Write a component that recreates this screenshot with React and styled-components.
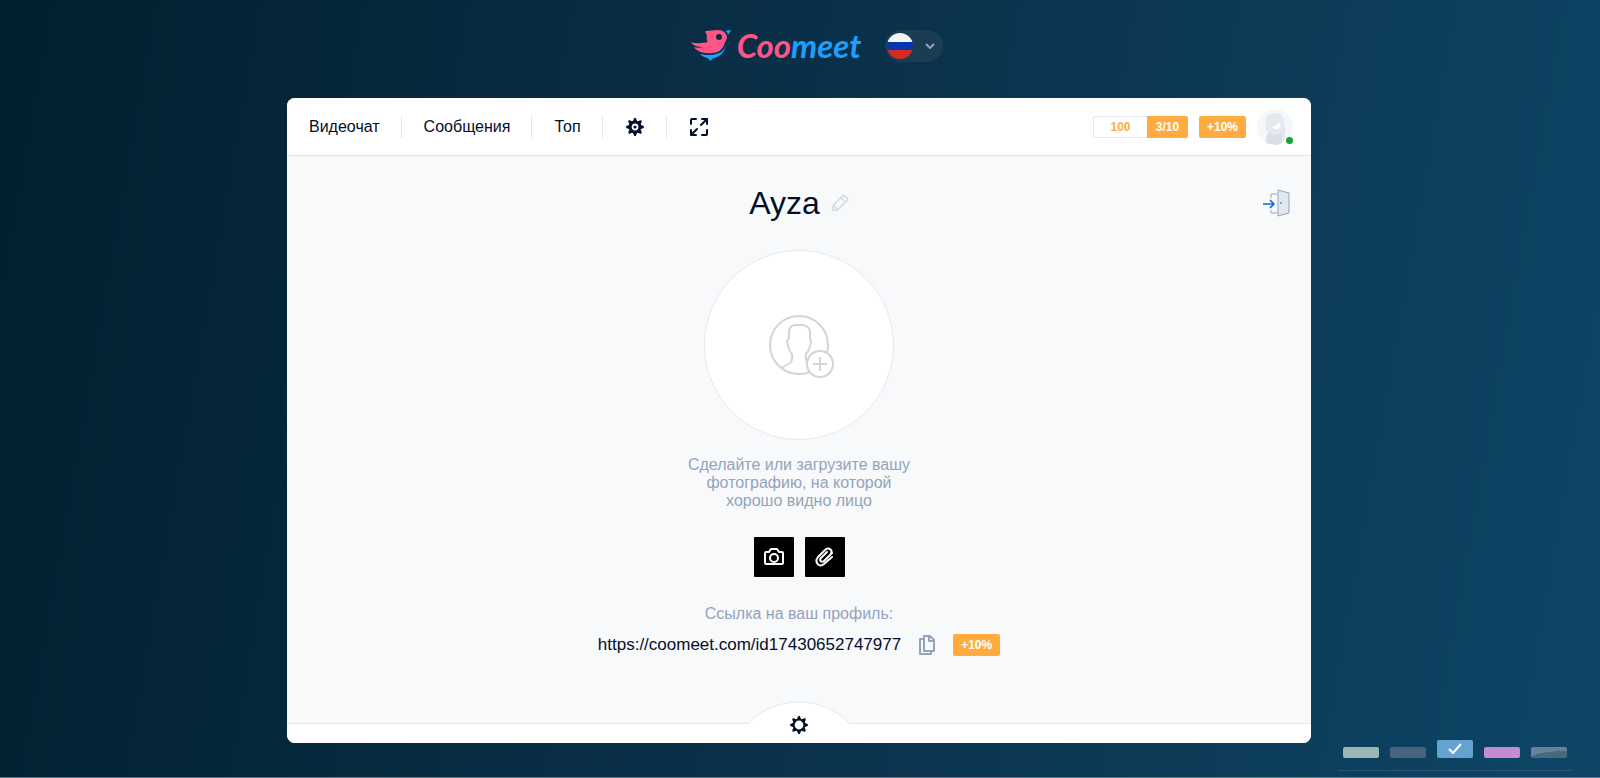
import React from "react";
import styled, { createGlobalStyle } from "styled-components";

const Icon = ({ size = 20, width, height, children, ...rest }) => (
  <svg
    width={width || size}
    height={height || size}
    fill="none"
    stroke="currentColor"
    strokeLinejoin="round"
    aria-hidden="true"
    {...rest}
  >
    {children}
  </svg>
);

const teeth = [0, 45, 90, 135, 180, 225, 270, 315];

const Gear = ({ dot }) => (
  <Icon viewBox="0 0 20 20" stroke="none" fill="currentColor">
    {teeth.map((angle) => (
      <path
        key={angle}
        d="M7.8 4.4L9 1.5Q10 0.2 11 1.5L12.2 4.4Z"
        transform={`rotate(${angle} 10 10)`}
      />
    ))}
    <circle
      cx="10"
      cy="10"
      r={dot ? 4.9 : 5.4}
      fill="white"
      stroke="currentColor"
      strokeWidth={dot ? 3 : 2}
    />
    {dot && <circle cx="10" cy="10" r="1.6" />}
  </Icon>
);

const Bird = () => (
  <Icon width={42} height={34} viewBox="0 0 42 34" stroke="none">
    <path
      d="M15 2C19 2 22 1 27 1C32 1 36 4 36 9C35 12 34 13 33 16C31 21 27 24 21 24C13 25 5 22 3 18C6 19 9 19 12 18C6 18 1 16 0 13C5 15 11 14 17 13C14 11 18 7 14 3Z"
      fill="#ff5486"
    />
    <circle cx="28" cy="8" r="3" fill="#092d44" />
    <path d="M34 2Q38 1 40 1Q39 3 37 6Q37 3 34 2Z" fill="#1e9fff" />
    <path
      d="M34 15C35 23 26 28 9 25C12 29 18 28 19 32Q20 32 21 30C28 28 36 23 34 15Z"
      fill="#1e9fff"
    />
  </Icon>
);

const tabs = ["Видеочат", "Сообщения", "Топ"];

const themes = [
  { name: "Зелёная", color: "#9ab7b5" },
  { name: "Серая", color: "#48637e" },
  { name: "Синяя", color: "#64a3d0", active: true },
  { name: "Розовая", color: "#c38bd4" },
  {
    name: "Волна",
    color:
      "radial-gradient(ellipse 105% 75% at 100% 110%, #48687f 98%, #668298 100%)",
  },
];

const App = () => {
  return (
    <>
      <GlobalStyle />
      <Page>
        <TopBar>
          <Logo href="#">
            <Bird />
            <LogoText>
              Coo<span>meet</span>
            </LogoText>
          </Logo>
          <Language aria-label="Язык">
            <Flag />
            <Icon size={10} viewBox="0 0 10 10" strokeWidth="2">
              <path d="M1 3L5 7L9 3" />
            </Icon>
          </Language>
        </TopBar>

        <Panel>
          <Header>
            <Nav>
              {tabs.map((tab) => (
                <NavItem key={tab}>
                  <a href="#">{tab}</a>
                </NavItem>
              ))}
              <NavItem>
                <IconButton aria-label="Настройки">
                  <Gear dot />
                </IconButton>
              </NavItem>
              <NavItem>
                <IconButton aria-label="Во весь экран">
                  <Icon viewBox="0 0 20 20" strokeWidth="2" strokeLinecap="round">
                    <path d="M2 7V3Q2 2 3 2H7M13 18H17Q18 18 18 17V13M12 8L18 2M13 2H18V7M8 12L2 18M2 13V18H7" />
                  </Icon>
                </IconButton>
              </NavItem>
            </Nav>
            <Status>
              <Counter>
                <span>100</span>
                <strong>3/10</strong>
              </Counter>
              <Bonus>+10%</Bonus>
              <Avatar href="#" aria-label="Профиль">
                <Icon size={36} viewBox="0 0 36 36" stroke="none">
                  <circle cx="18" cy="18" r="18" fill="#f5f7fa" />
                  <path
                    d="M9 14C7 1 28 1 27 13C27 17 30 19 28 24C29 28 27 32 26 33L23 35H10C8 31 9 26 12 23C7 21 8 17 9 14Z"
                    fill="#e4e9f0"
                  />
                  <path d="M12 23L18 26L24 24L25 34L20 36L10 34C8 30 9 26 12 23Z" fill="#d8dfe9" />
                  <path d="M15 18C19 17 21 15 23 13C25 20 20 22 15 18Z" fill="#fff" />
                </Icon>
                <Online />
              </Avatar>
            </Status>
          </Header>

          <Content>
            <TitleRow>
              <span />
              <Title>
                <h1>Ayza</h1>
                <IconButton aria-label="Изменить имя" $color="#d5dee9">
                  <Icon size={18} viewBox="0 0 20 20" strokeWidth="2">
                    <path d="M2 18V13L13 2Q14 1 15 2L18 5Q19 6 18 7L7 18ZM11 4L16 9M3 13L7 17" />
                  </Icon>
                </IconButton>
              </Title>
              <IconButton aria-label="Выйти" $color="#94a3bb">
                <Icon width={28} height={28} viewBox="0 0 28 28">
                  <path d="M8 9V5H14M8 21V24H14" />
                  <path d="M15 1L26 4V24L15 27Z" fill="#e2e8f0" />
                  <path d="M17 14H19" strokeWidth="2" />
                  <path d="M0 15H10M7 11L11 15L7 19" stroke="#0f62f2" strokeWidth="1.6" />
                </Icon>
              </IconButton>
            </TitleRow>

            <Photo aria-label="Добавить фотографию">
              <Icon size={66} viewBox="0 0 66 66" strokeWidth="2">
                <circle cx="30" cy="30" r="29" />
                <path d="M12 53L21 48Q24 46 23 39C20 36 20 34 19 31L18 26L20 23V16Q21 10 27 10H33Q39 10 41 16V23L42 26L41 31C40 34 40 36 37 39Q36 44 38 47L42 49" />
                <circle cx="51" cy="49" r="13" fill="white" />
                <path d="M51 42V56M44 49H58" />
              </Icon>
            </Photo>
            <Hint>Сделайте или загрузите вашу фотографию, на которой хорошо видно лицо</Hint>

            <Actions>
              <ActionButton aria-label="Сделать фото">
                <Icon viewBox="0 0 20 20" strokeWidth="2">
                  <path d="M2 5H5L7 2H13L15 5H18Q19 5 19 6V16Q19 17 18 17H2Q1 17 1 16V6Q1 5 2 5Z" />
                  <circle cx="10" cy="11" r="4" />
                </Icon>
              </ActionButton>
              <ActionButton aria-label="Загрузить файл">
                <Icon viewBox="0 0 20 20" strokeWidth="2" strokeLinecap="round">
                  <path d="M17 10L9 17C4 21 -1 15 3 10L10 3C14 -1 19 4 15 8L9 14C6 16 4 13 6 11L12 5M17 6L9 14" />
                </Icon>
              </ActionButton>
            </Actions>

            <LinkLabel>Ссылка на ваш профиль:</LinkLabel>
            <ProfileLink>
              <a href="https://coomeet.com/id17430652747977">
                https://coomeet.com/id17430652747977
              </a>
              <IconButton aria-label="Скопировать" $color="#94a3bb">
                <Icon width={16} height={20} viewBox="0 0 16 20" strokeWidth="2">
                  <path d="M5 1H11L15 5V16H5ZM10 1V6H15M4 4H1V19H12V17" />
                </Icon>
              </IconButton>
              <Bonus>+10%</Bonus>
            </ProfileLink>
          </Content>

          <Footer>
            <Bump>
              <Icon width={100} height={24} viewBox="0 0 100 24">
                <path d="M0 24V22C26 -6 74 -6 100 22V24Z" fill="white" stroke="none" />
                <path d="M0 22C26 -6 74 -6 100 22" stroke="#e3e9f0" />
              </Icon>
            </Bump>
            <FooterButton aria-label="Настройки">
              <Gear />
            </FooterButton>
          </Footer>
        </Panel>

        <Themes>
          {themes.map(({ name, color, active }) => (
            <Theme key={name} aria-label={name} $color={color} $active={active}>
              {active && (
                <Icon width={14} height={12} viewBox="0 0 14 12" strokeWidth="2">
                  <path d="M1 6L5 10L13 1" />
                </Icon>
              )}
            </Theme>
          ))}
        </Themes>
      </Page>
    </>
  );
};

const GlobalStyle = createGlobalStyle`
  * {
    box-sizing: border-box;
  }
  body {
    margin: 0;
    font-family: "Liberation Sans", Arial, sans-serif;
    font-size: 16px;
    color: #020f2b;
  }
  a {
    color: inherit;
    text-decoration: none;
  }
  button {
    border: 0;
    padding: 0;
    font: inherit;
    cursor: pointer;
  }
  svg {
    display: block;
  }
`;

const Page = styled.div`
  position: relative;
  display: flex;
  flex-direction: column;
  align-items: center;
  min-height: 100vh;
  padding-right: 2px;
  background: linear-gradient(100deg, #01202e 0%, #0a3049 48%, #0e4566 100%);
  border-bottom: 1px solid #5b7789;
`;

const TopBar = styled.header`
  display: flex;
  align-items: center;
  gap: 24px;
  height: 98px;
  padding-bottom: 6px;
  padding-left: 36px;
`;

const Logo = styled.a`
  display: flex;
  align-items: center;
  gap: 4px;
`;

const LogoText = styled.span`
  font-family: Lato, sans-serif;
  font-size: 33px;
  font-style: italic;
  font-weight: 700;
  line-height: 36px;
  padding-bottom: 3px;
  color: #ff5486;

  span {
    color: #1e9fff;
  }
`;

const Language = styled.button`
  display: flex;
  align-items: center;
  justify-content: space-between;
  width: 58px;
  height: 32px;
  padding: 0 8px 0 2px;
  border-radius: 16px;
  background: #1b3d54;
  color: #94a3bb;
`;

const Flag = styled.span`
  width: 26px;
  height: 26px;
  border-radius: 50%;
  background: linear-gradient(#f3f4f5 34%, #0638ad 34% 67%, #d62b20 67%);
`;

const Panel = styled.main`
  display: flex;
  flex-direction: column;
  width: 64vw;
  min-height: 645px;
  border-radius: 8px;
  background: #f7f9fb;
  overflow: hidden;
`;

const Header = styled.div`
  display: flex;
  align-items: center;
  justify-content: space-between;
  height: 58px;
  padding-right: 18px;
  border-bottom: 1px solid #dfe5ec;
  background: white;
`;

const Nav = styled.nav`
  display: flex;
`;

const NavItem = styled.div`
  display: flex;
  align-items: center;
  height: 22px;
  padding: 0 21px 0 22px;

  & + & {
    border-left: 1px solid #dfe7f0;
  }
`;

const IconButton = styled.button`
  background: none;
  color: ${({ $color }) => $color || "#020f2b"};
`;

const Status = styled.div`
  display: flex;
  align-items: center;
  gap: 11px;
`;

const Counter = styled.div`
  display: flex;
  height: 22px;
  border: 1px solid #e3e9f0;
  border-right: 0;
  border-radius: 2px;
  font-size: 12px;
  font-weight: 700;
  line-height: 20px;
  text-align: center;
  color: #ffab3f;

  span {
    width: 53px;
  }
  strong {
    width: 41px;
    margin: -1px 0;
    border-radius: 0 2px 2px 0;
    line-height: 22px;
    background: #ffab3f;
    color: white;
  }
`;

const Bonus = styled.span`
  width: 47px;
  border-radius: 2px;
  font-size: 12px;
  font-weight: 700;
  line-height: 22px;
  text-align: center;
  background: #ffab3f;
  color: white;
`;

const Avatar = styled.a`
  position: relative;
`;

const Online = styled.span`
  position: absolute;
  right: 0;
  bottom: 1px;
  width: 7px;
  height: 7px;
  border-radius: 50%;
  background: #16a82c;
`;

const Content = styled.section`
  display: flex;
  flex: 1;
  flex-direction: column;
  align-items: center;
  padding: 28px 20px 0;
`;

const TitleRow = styled.div`
  display: grid;
  grid-template-columns: 1fr auto 1fr;
  align-items: center;
  width: 100%;
  margin-bottom: 28px;

  > :last-child {
    justify-self: end;
  }
`;

const Title = styled.div`
  display: flex;
  align-items: center;
  gap: 11px;

  h1 {
    margin: 0;
    font-size: 32px;
    font-weight: 400;
    line-height: 38px;
  }
`;

const Photo = styled.button`
  display: flex;
  align-items: center;
  justify-content: center;
  width: 190px;
  height: 190px;
  padding: 5px 0 0 5px;
  border: 1px solid #e3eaf1;
  border-radius: 50%;
  background: white;
  color: #d2d4da;
`;

const Hint = styled.p`
  width: 230px;
  margin: 16px 0 27px;
  line-height: 18px;
  text-align: center;
  color: #94a3bb;
`;

const Actions = styled.div`
  display: flex;
  gap: 11px;
`;

const ActionButton = styled.button`
  display: flex;
  align-items: center;
  justify-content: center;
  width: 40px;
  height: 40px;
  border-radius: 1px;
  background: black;
  color: white;
`;

const LinkLabel = styled.div`
  margin-top: 28px;
  line-height: 18px;
  color: #94a3bb;
`;

const ProfileLink = styled.div`
  display: flex;
  align-items: center;
  gap: 18px;
  margin-top: 11px;

  a {
    font-size: 17px;
  }
`;

const Footer = styled.footer`
  position: relative;
  display: flex;
  justify-content: center;
  height: 20px;
  border-top: 1px solid #e3e9f0;
  background: white;
`;

const Bump = styled.div`
  position: absolute;
  bottom: 18px;
`;

const FooterButton = styled.button`
  position: absolute;
  bottom: 8px;
  background: none;
  color: #020f2b;
`;

const Themes = styled.div`
  position: absolute;
  right: 28px;
  bottom: 6px;
  display: flex;
  align-items: flex-end;
  gap: 11px;
  padding: 0 5px 12px;
  border-bottom: 1px solid #285574;
`;

const Theme = styled.button`
  display: flex;
  align-items: center;
  justify-content: center;
  width: 36px;
  height: ${({ $active }) => ($active ? 18 : 11)}px;
  border-radius: 2px;
  background: ${({ $color }) => $color};
  color: white;
`;

export default App;
